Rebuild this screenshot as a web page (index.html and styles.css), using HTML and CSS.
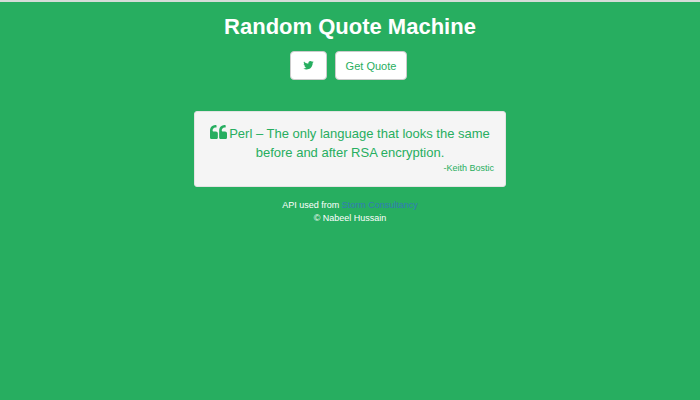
FILE: index.html
```html
<!DOCTYPE html>
<html lang="en">
<head>
<meta charset="utf-8">
<title>Random Quote Machine</title>
<link rel="stylesheet" href="styles.css">
</head>
<body>
<main class="page">
  <h1 class="title">Random Quote Machine</h1>
  <div class="actions">
    <button class="btn btn-icon" type="button" aria-label="Tweet quote">
      <svg class="bird" viewBox="0 0 1664 1408" aria-hidden="true"><path d="M1620 280q-67 98-162 167 1 14 1 42 0 130-38 259.500t-115.500 248.500-184.500 210.500-258 146-323 54.500q-271 0-496-145 35 4 78 4 225 0 401-138-105-2-188-64.500t-114-159.500q33 5 61 5 43 0 85-11-112-23-185.500-111.500t-73.500-205.500v-4q68 38 146 41-66-44-105-115t-39-154q0-88 44-163 121 149 294.500 238.500t371.500 99.500q-8-38-8-74 0-134 94.500-228.500t228.500-94.500q140 0 236 102 109-21 205-78-37 115-142 178 93-10 186-50z" transform="translate(0 -128)"/></svg>
    </button>
    <button class="btn" type="button">Get Quote</button>
  </div>
  <blockquote class="well">
    <p class="quote"><svg class="mark" viewBox="0 0 1664 1408" aria-hidden="true"><path d="M768 832v384q0 80-56 136t-136 56H192q-80 0-136-56T0 1216V512q0-104 40.500-198.500T150 150 313.500 40.500 512 0h64q26 0 45 19t19 45v128q0 26-19 45t-45 19h-64q-106 0-181 75t-75 181v32q0 40 28 68t68 28h224q80 0 136 56t56 136z"/><path transform="translate(896 0)" d="M768 832v384q0 80-56 136t-136 56H192q-80 0-136-56T0 1216V512q0-104 40.500-198.500T150 150 313.500 40.500 512 0h64q26 0 45 19t19 45v128q0 26-19 45t-45 19h-64q-106 0-181 75t-75 181v32q0 40 28 68t68 28h224q80 0 136 56t56 136z"/></svg>Perl – The only language that looks the same before and after RSA encryption.</p>
    <cite class="author">-Keith Bostic</cite>
  </blockquote>
  <footer class="credits">
    <p>API used from <a href="#">Storm Consultancy</a></p>
    <p>© Nabeel Hussain</p>
  </footer>
</main>
</body>
</html>
```
FILE: styles.css
```css
* { box-sizing: border-box; }

body {
  margin: 0;
  min-height: 100vh;
  background: #27ae60;
  border-top: 2px solid #d5dcd8;
  color: #fff;
  font-family: "Liberation Sans", Arial, sans-serif;
  text-align: center;
}

p { margin: 0; }

.page {
  display: flex;
  flex-direction: column;
  align-items: center;
  padding: 12px 16px;
}

.title {
  margin: 0;
  font-size: 22px;
  line-height: 25px;
}

.actions {
  display: flex;
  gap: 8px;
  margin-top: 12px;
  padding-right: 3px;
}

.btn {
  display: flex;
  align-items: center;
  height: 29px;
  padding: 0 10px;
  border: 1px solid #ccc;
  border-radius: 4px;
  background: #fff;
  color: #27ae60;
  font-family: inherit;
  font-size: 11px;
}

.btn-icon { padding: 0 12px; }

.bird {
  width: 11px;
  fill: #27ae60;
}

.well {
  width: 100%;
  max-width: 312px;
  margin: 31px 0 0;
  padding: 12px 11px 11px;
  border: 1px solid #e3e3e3;
  border-radius: 3px;
  background: #f5f5f5;
  color: #27ae60;
}

.quote {
  font-size: 13px;
  line-height: 19px;
}

.mark {
  width: 17px;
  margin-right: 2px;
  vertical-align: -1px;
  fill: #27ae60;
}

.author {
  display: block;
  font-size: 9px;
  font-style: normal;
  line-height: 13px;
  text-align: right;
}

.credits {
  margin-top: 12px;
  font-size: 9px;
  line-height: 13px;
}

.credits a {
  color: #337ab7;
  text-decoration: none;
}
```
